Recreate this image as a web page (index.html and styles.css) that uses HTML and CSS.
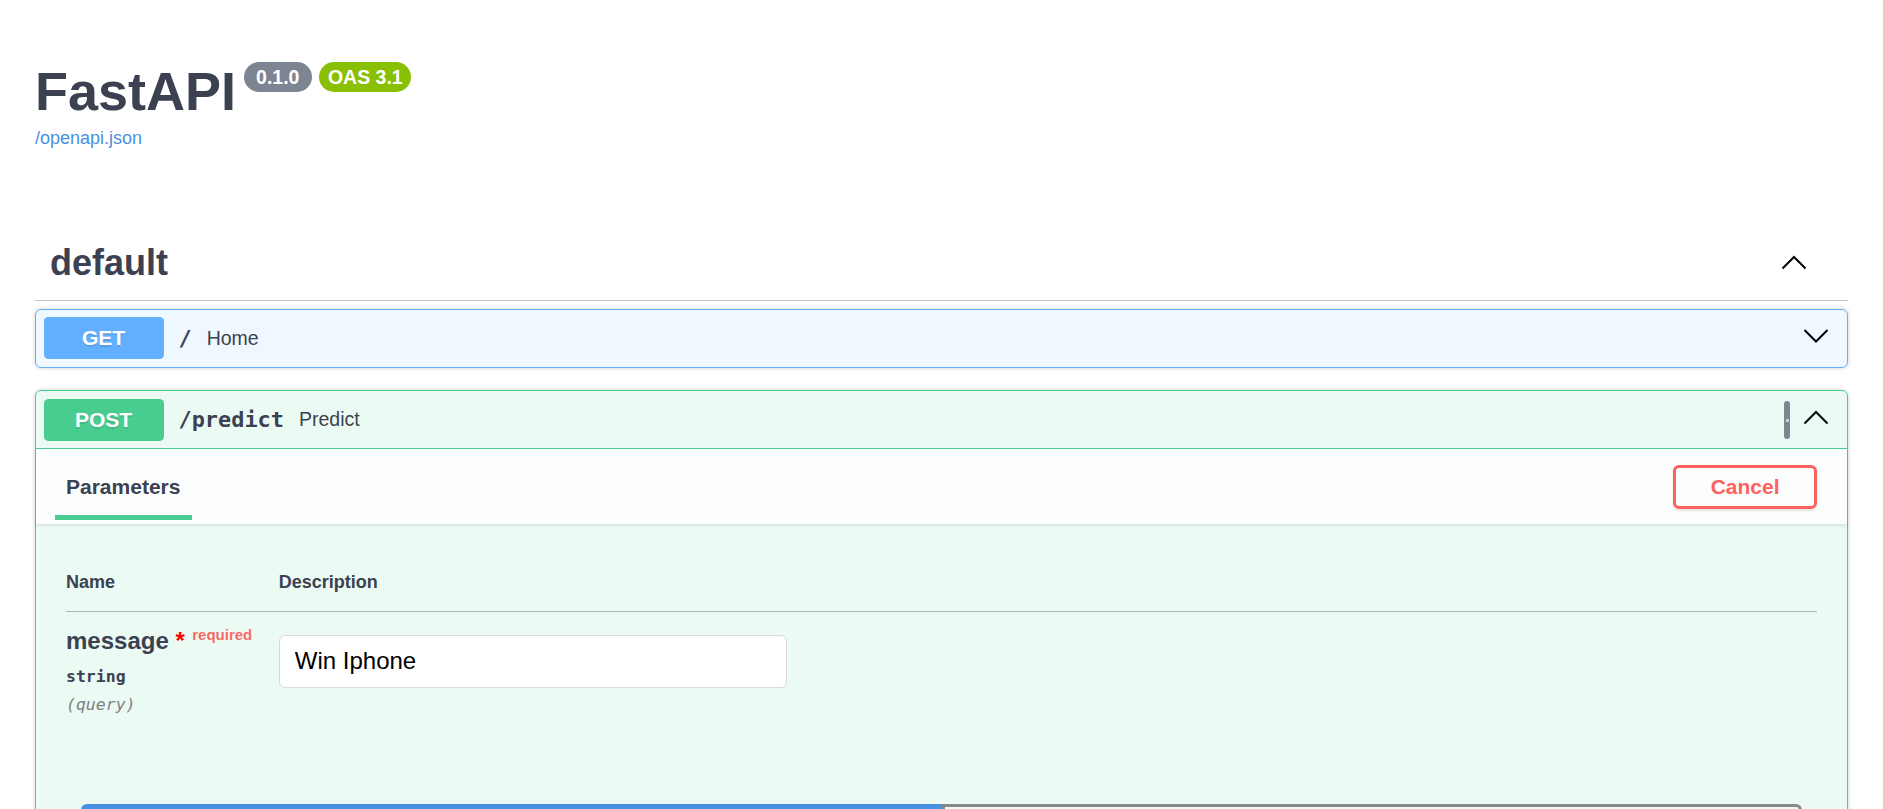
FILE: index.html
```html
<!DOCTYPE html>
<html lang="en">
<head>
<meta charset="utf-8">
<title>FastAPI - Swagger UI</title>
<link rel="stylesheet" href="styles.css">
</head>
<body>
<div class="wrapper">
  <div class="info">
    <div class="title-row">
      <h2 class="title">FastAPI</h2>
      <span class="badge version">0.1.0</span>
      <span class="badge oas">OAS 3.1</span>
    </div>
    <a class="spec-link" href="#">/openapi.json</a>
  </div>

  <section class="tag-section">
    <div class="tag-header">
      <h3 class="tag-name">default</h3>
      <svg class="chev tag-chev" width="26" height="16" viewBox="0 0 26 16"><polyline points="1.5,14.5 13,3 24.5,14.5" fill="none" stroke="#000" stroke-width="2"/></svg>
    </div>

    <div class="opblock get">
      <div class="summary">
        <span class="method">GET</span>
        <span class="path">/</span>
        <span class="desc">Home</span>
        <svg class="chev op-chev" width="26" height="16" viewBox="0 0 26 16"><polyline points="1.5,2 13,13.5 24.5,2" fill="none" stroke="#000" stroke-width="2"/></svg>
      </div>
    </div>

    <div class="opblock post">
      <div class="summary">
        <span class="method">POST</span>
        <span class="path">/predict</span>
        <span class="desc">Predict</span>
        <span class="copy-bar"><span class="copy-mark"></span></span>
        <svg class="chev op-chev" width="26" height="16" viewBox="0 0 26 16"><polyline points="1.5,14.5 13,3 24.5,14.5" fill="none" stroke="#000" stroke-width="2"/></svg>
      </div>
      <div class="section-header">
        <h4 class="tab-title"><span class="tab-label">Parameters</span></h4>
        <button class="btn cancel">Cancel</button>
      </div>
      <div class="table-container">
        <table class="params">
          <thead>
            <tr><th class="col-name">Name</th><th>Description</th></tr>
          </thead>
          <tbody>
            <tr>
              <td class="col-name">
                <div class="param-name">message<span class="star">&nbsp;*</span><span class="req">required</span></div>
                <div class="param-type">string</div>
                <div class="param-in">(query)</div>
              </td>
              <td>
                <input class="param-input" type="text" value="Win Iphone">
              </td>
            </tr>
          </tbody>
        </table>
      </div>
      <div class="btn-group">
        <button class="btn execute">Execute</button>
        <button class="btn clear">Clear</button>
      </div>
    </div>
  </section>
</div>
</body>
</html>
```

FILE: styles.css
```css
html, body {
  margin: 0;
  padding: 0;
  background: #fff;
  overflow: hidden;
}

body {
  font-family: "Liberation Sans", Arial, sans-serif;
  color: #3b4151;
}

.wrapper {
  padding: 0 35px;
}

/* ---------- info ---------- */
.info {
  padding-top: 60px;
}

.title-row {
  display: flex;
  align-items: flex-start;
}

.title {
  margin: 0;
  font-size: 54px;
  line-height: 62px;
  font-weight: 700;
  color: #3b4151;
}

.badge {
  margin-top: 2px;
  margin-left: 7.5px;
  height: 30px;
  line-height: 30px;
  border-radius: 57px;
  font-size: 19.5px;
  font-weight: 700;
  color: #fff;
}

.badge.version {
  background: #7d8492;
  padding: 0 12.5px;
}

.badge.oas {
  background: #89bf04;
  padding: 0 8.5px;
}

.spec-link {
  display: block;
  margin-top: 6px;
  font-size: 18px;
  line-height: 21px;
  color: #4990e2;
  text-decoration: none;
}

/* ---------- tag ---------- */
.tag-section {
  margin-top: 78px;
}

.tag-header {
  display: flex;
  align-items: center;
  padding: 15px 41px 16px 15px;
  border-bottom: 1px solid rgba(59, 65, 81, 0.3);
  margin-bottom: 7.5px;
}

.tag-name {
  flex: 1;
  margin: 0;
  font-size: 36px;
  line-height: 42px;
  font-weight: 700;
  color: #3b4151;
}

.chev {
  display: block;
  flex: none;
}

.tag-chev {
  margin-bottom: 3px;
}

/* ---------- opblocks ---------- */
.opblock {
  border: 1px solid #000;
  border-radius: 6px;
  margin-bottom: 22.5px;
  box-shadow: 0 0 4.5px rgba(0, 0, 0, 0.19);
}

.opblock.get {
  background: rgba(97, 175, 254, 0.1);
  border-color: #61affe;
}

.opblock.post {
  background: rgba(73, 204, 144, 0.1);
  border-color: #49cc90;
}

.summary {
  display: flex;
  align-items: center;
  padding: 7.5px;
}

.opblock.post .summary {
  border-bottom: 1px solid #49cc90;
}

.method {
  flex: none;
  width: 120px;
  padding: 9px 0;
  border-radius: 4.5px;
  font-size: 21px;
  line-height: 24px;
  font-weight: 700;
  text-align: center;
  color: #fff;
  text-shadow: 0 1.5px 0 rgba(0, 0, 0, 0.1);
}

.get .method {
  background: #61affe;
}

.post .method {
  background: #49cc90;
}

.path {
  padding: 0 15px;
  font-family: "DejaVu Sans Mono", monospace;
  font-size: 21.9px;
  font-weight: 700;
  color: #3b4151;
}

.desc {
  flex: 1;
  font-size: 19.5px;
  color: #3b4151;
}

.op-chev {
  margin-right: 11px;
  margin-bottom: 5px;
}

.copy-bar {
  flex: none;
  position: relative;
  width: 6px;
  height: 38px;
  margin-right: 12.5px;
  border-radius: 3px;
  background: #7d8492;
}

.copy-mark {
  position: absolute;
  left: 2px;
  top: 18px;
  width: 3px;
  height: 3px;
  background: #c9ccd3;
}

/* ---------- section header ---------- */
.section-header {
  display: flex;
  align-items: center;
  justify-content: space-between;
  min-height: 75px;
  padding: 0 30px;
  background: rgba(255, 255, 255, 0.8);
  box-shadow: 0 1.5px 3px rgba(0, 0, 0, 0.1);
}

.tab-title {
  margin: 0;
  font-size: 21px;
  font-weight: 700;
  color: #3b4151;
}

.tab-label {
  position: relative;
  display: inline-block;
  line-height: 24px;
}

.tab-label::after {
  content: "";
  position: absolute;
  left: -10%;
  width: 120%;
  top: 40px;
  height: 5px;
  background: #49cc90;
}

.btn {
  font-family: "Liberation Sans", Arial, sans-serif;
  font-size: 21px;
  line-height: 24px;
  font-weight: 700;
  padding: 7px 34.5px;
  border-radius: 6px;
  background: transparent;
  cursor: pointer;
}

.btn.cancel {
  border: 3px solid #ff6060;
  color: #ff6060;
  box-shadow: 0 1.5px 3px rgba(0, 0, 0, 0.1);
}

/* ---------- parameters table ---------- */
.table-container {
  padding: 30px 30px;
}

.params {
  width: 100%;
  border-collapse: collapse;
}

.params th {
  text-align: left;
  padding: 18px 0;
  font-size: 18px;
  line-height: 21px;
  font-weight: 700;
  color: #3b4151;
  border-bottom: 1px solid rgba(59, 65, 81, 0.2);
}

.params .col-name {
  width: 212.8px;
}

.params td {
  padding: 15px 0 0 0;
  vertical-align: top;
}

.param-name {
  font-size: 24px;
  line-height: 28px;
  font-weight: 700;
  color: #3b4151;
  white-space: nowrap;
}

.star {
  color: #f00;
}

.req {
  position: relative;
  top: -9px;
  padding-left: 7.5px;
  font-size: 15px;
  font-weight: 700;
  color: rgba(255, 0, 0, 0.6);
}

.param-type {
  padding: 7.5px 0;
  font-family: "DejaVu Sans Mono", monospace;
  font-size: 16.5px;
  line-height: 21px;
  font-weight: 700;
  color: #3b4151;
}

.param-in {
  font-family: "DejaVu Sans Mono", monospace;
  font-size: 16.5px;
  line-height: 21px;
  font-style: italic;
  color: #808080;
}

.param-input {
  display: block;
  box-sizing: border-box;
  width: 508px;
  height: 53px;
  margin: 7.5px 0;
  padding: 12px 15px;
  border: 1px solid #d9d9d9;
  border-radius: 6px;
  background: #fff;
  font-family: "Liberation Sans", Arial, sans-serif;
  font-size: 24px;
  color: #000;
  outline: none;
}

/* ---------- execute / clear ---------- */
.btn-group {
  display: flex;
  padding: 58.5px 45px 30px;
}

.btn-group .btn {
  flex: 1;
}

.btn.execute {
  background: #4990e2;
  border: 3px solid #4990e2;
  color: #fff;
  border-radius: 6px 0 0 6px;
}

.btn.clear {
  border: 3px solid #888;
  color: #3b4151;
  border-radius: 0 6px 6px 0;
}
```
